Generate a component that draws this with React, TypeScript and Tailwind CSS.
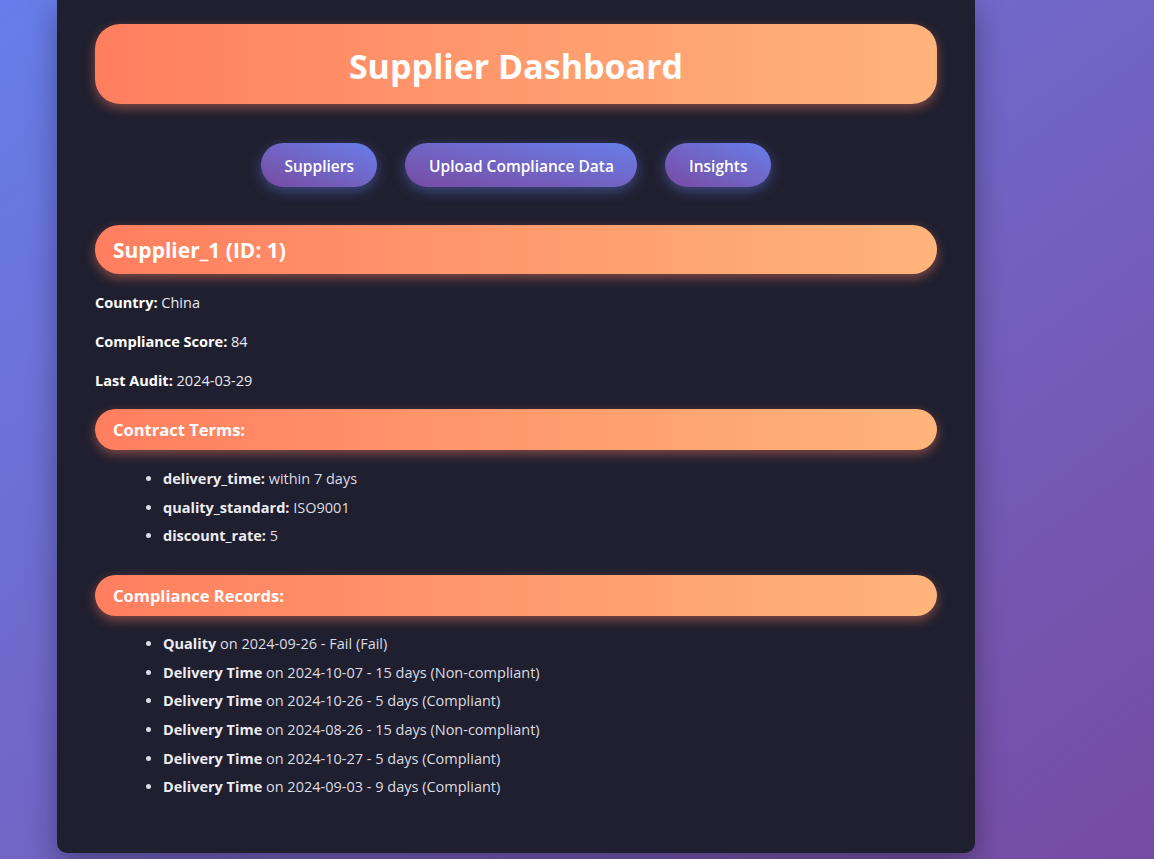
export default function App() {
  const terms = [
    ['delivery_time', 'within 7 days'],
    ['quality_standard', 'ISO9001'],
    ['discount_rate', '5'],
  ];
  const records = [
    ['Quality', '2024-09-26', 'Fail (Fail)'],
    ['Delivery Time', '2024-10-07', '15 days (Non-compliant)'],
    ['Delivery Time', '2024-10-26', '5 days (Compliant)'],
    ['Delivery Time', '2024-08-26', '15 days (Non-compliant)'],
    ['Delivery Time', '2024-10-27', '5 days (Compliant)'],
    ['Delivery Time', '2024-09-03', '9 days (Compliant)'],
  ];
  const navs = ['Suppliers', 'Upload Compliance Data', 'Insights'];

  return (
    <div
      className="min-h-[859px] bg-gradient-to-br from-[#667eea] to-[#764ba2] pb-[7px]"
      style={{ fontFamily: '"Open Sans", sans-serif' }}
    >
      <div className="ml-[57px] w-[918px] bg-[#1f1f2f] rounded-b-[10px] shadow-[0_10px_30px_rgba(0,0,0,0.35)] px-[38px] pt-[24px] pb-[55px]">
        {/* Header */}
        <div className="h-[80px] rounded-[25px] bg-gradient-to-r from-[#ff7e5f] to-[#feb47b] shadow-[0_4px_12px_rgba(255,126,95,0.45)] flex items-center justify-center pt-[5px]">
          <h1 className="text-[34px] font-bold text-white">Supplier Dashboard</h1>
        </div>

        {/* Nav */}
        <div className="flex justify-center gap-[28px] mt-[39px]">
          {navs.map((n) => (
            <button
              key={n}
              className="h-[44px] px-[23.5px] pt-[3px] rounded-full bg-gradient-to-tr from-[#764ba2] to-[#667eea] text-white text-[15.5px] font-semibold shadow-[0_4px_14px_rgba(102,126,234,0.45)]"
            >
              {n}
            </button>
          ))}
        </div>

        {/* Supplier */}
        <div className="mt-[38px] h-[49px] rounded-full bg-gradient-to-r from-[#ff7e5f] to-[#feb47b] shadow-[0_4px_12px_rgba(255,126,95,0.45)] flex items-center px-[18px] pt-[2px]">
          <h2 className="text-[21px] font-bold text-white">Supplier_1 (ID: 1)</h2>
        </div>

        <div className="text-[14.5px] text-[#e8e8ee] leading-[22px]">
          <p className="mt-[18px]"><strong className="text-white">Country:</strong> China</p>
          <p className="mt-[17px]"><strong className="text-white">Compliance Score:</strong> 84</p>
          <p className="mt-[17px]"><strong className="text-white">Last Audit:</strong> 2024-03-29</p>
        </div>

        {/* Contract terms */}
        <div className="mt-[17px] h-[41px] rounded-full bg-gradient-to-r from-[#ff7e5f] to-[#feb47b] shadow-[0_4px_12px_rgba(255,126,95,0.45)] flex items-center px-[18px] pt-[2px]">
          <h3 className="text-[16.5px] font-bold text-white">Contract Terms:</h3>
        </div>
        <ul className="list-disc pl-[68px] mt-[18px] text-[14.5px] text-[#dcdce4] leading-[22px] flex flex-col gap-[6.6px]">
          {terms.map(([k, v]) => (
            <li key={k}><strong className="text-[#ececf2]">{k}:</strong> {v}</li>
          ))}
        </ul>

        {/* Compliance records */}
        <div className="mt-[28px] h-[41px] rounded-full bg-gradient-to-r from-[#ff7e5f] to-[#feb47b] shadow-[0_4px_12px_rgba(255,126,95,0.45)] flex items-center px-[18px] pt-[2px]">
          <h3 className="text-[16.5px] font-bold text-white">Compliance Records:</h3>
        </div>
        <ul className="list-disc pl-[68px] mt-[17px] text-[14.5px] text-[#dcdce4] leading-[22px] flex flex-col gap-[6.6px]">
          {records.map(([t, d, r], i) => (
            <li key={i}><strong className="text-[#ececf2]">{t}</strong> on {d} - {r}</li>
          ))}
        </ul>
      </div>
    </div>
  );
}
